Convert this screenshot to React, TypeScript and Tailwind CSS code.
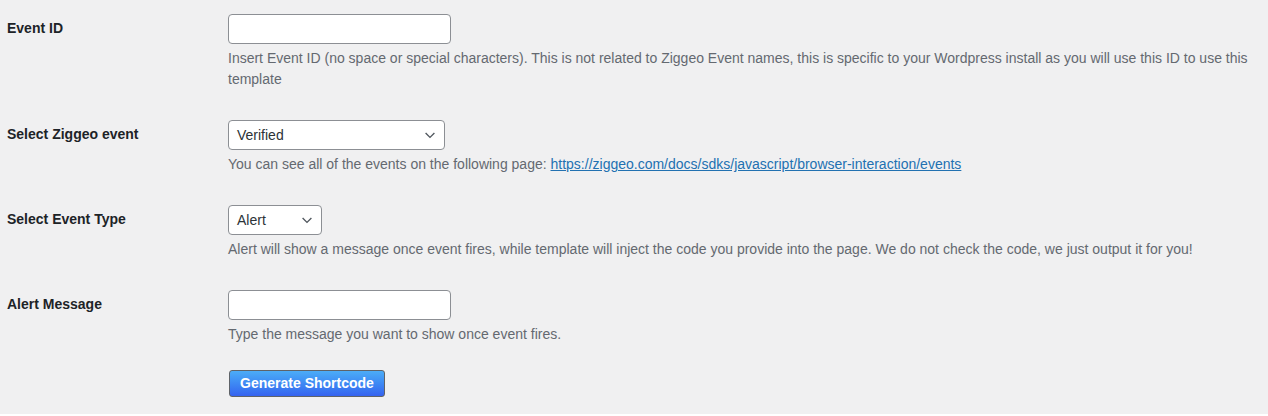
import React from "react";

const font = { fontFamily: '"Liberation Sans", Arial, sans-serif' };

function Chevron() {
  return (
    <svg width="16" height="16" viewBox="0 0 20 20" className="pointer-events-none absolute right-[6px] top-1/2 -translate-y-1/2">
      <path d="M4.5 7.5l5.5 5.5 5.5-5.5" fill="none" stroke="#50575e" strokeWidth="1.7" />
    </svg>
  );
}

function Row({ label, children }: { label: string; children: React.ReactNode }) {
  return (
    <div className="flex">
      <div className="w-[211px] shrink-0 pt-[20px] pb-[20px] pr-[10px] text-[14px] leading-[1.3] font-bold text-[#1d2327]">
        {label}
      </div>
      <div className="flex-1 py-[15px] px-[10px] text-[14px] leading-[1.3]">{children}</div>
    </div>
  );
}

function Desc({ children }: { children: React.ReactNode }) {
  return <p className="mt-[4px] text-[14px] leading-[21px] text-[#646970]">{children}</p>;
}

export default function App() {
  return (
    <div className="min-h-[416px] bg-[#f0f0f1] pl-[7px] -mt-[2px] pt-[1px]" style={font}>
      <Row label="Event ID">
        <input type="text" className="block w-[223px] h-[30px] rounded-[4px] border border-[#8c8f94] bg-white px-[8px] text-[14px] outline-none" />
        <Desc>
          Insert Event ID (no space or special characters). This is not related to Ziggeo Event names, this is specific to your Wordpress install as you will use this ID to use this template
        </Desc>
      </Row>
      <Row label="Select Ziggeo event">
        <div className="relative w-[217px] h-[30px] rounded-[4px] border border-[#8c8f94] bg-white">
          <span className="block pl-[8px] leading-[28px] text-[14px] text-[#2c3338]">Verified</span>
          <Chevron />
        </div>
        <Desc>
          You can see all of the events on the following page:{" "}
          <a href="#" className="text-[#2271b1] underline">https://ziggeo.com/docs/sdks/javascript/browser-interaction/events</a>
        </Desc>
      </Row>
      <Row label="Select Event Type">
        <div className="relative w-[94px] h-[30px] rounded-[4px] border border-[#8c8f94] bg-white">
          <span className="block pl-[8px] leading-[28px] text-[14px] text-[#2c3338]">Alert</span>
          <Chevron />
        </div>
        <Desc>
          Alert will show a message once event fires, while template will inject the code you provide into the page. We do not check the code, we just output it for you!
        </Desc>
      </Row>
      <Row label="Alert Message">
        <input type="text" className="block w-[223px] h-[30px] rounded-[4px] border border-[#8c8f94] bg-white px-[8px] text-[14px] outline-none" />
        <Desc>Type the message you want to show once event fires.</Desc>
      </Row>
      <div className="pl-[222px] pt-[10px]">
        <button className="h-[27px] w-[156px] rounded-[3px] border border-[#5f6368] bg-gradient-to-b from-[#4cacf7] to-[#3662ef] text-[14px] font-bold text-white">
          Generate Shortcode
        </button>
      </div>
    </div>
  );
}
